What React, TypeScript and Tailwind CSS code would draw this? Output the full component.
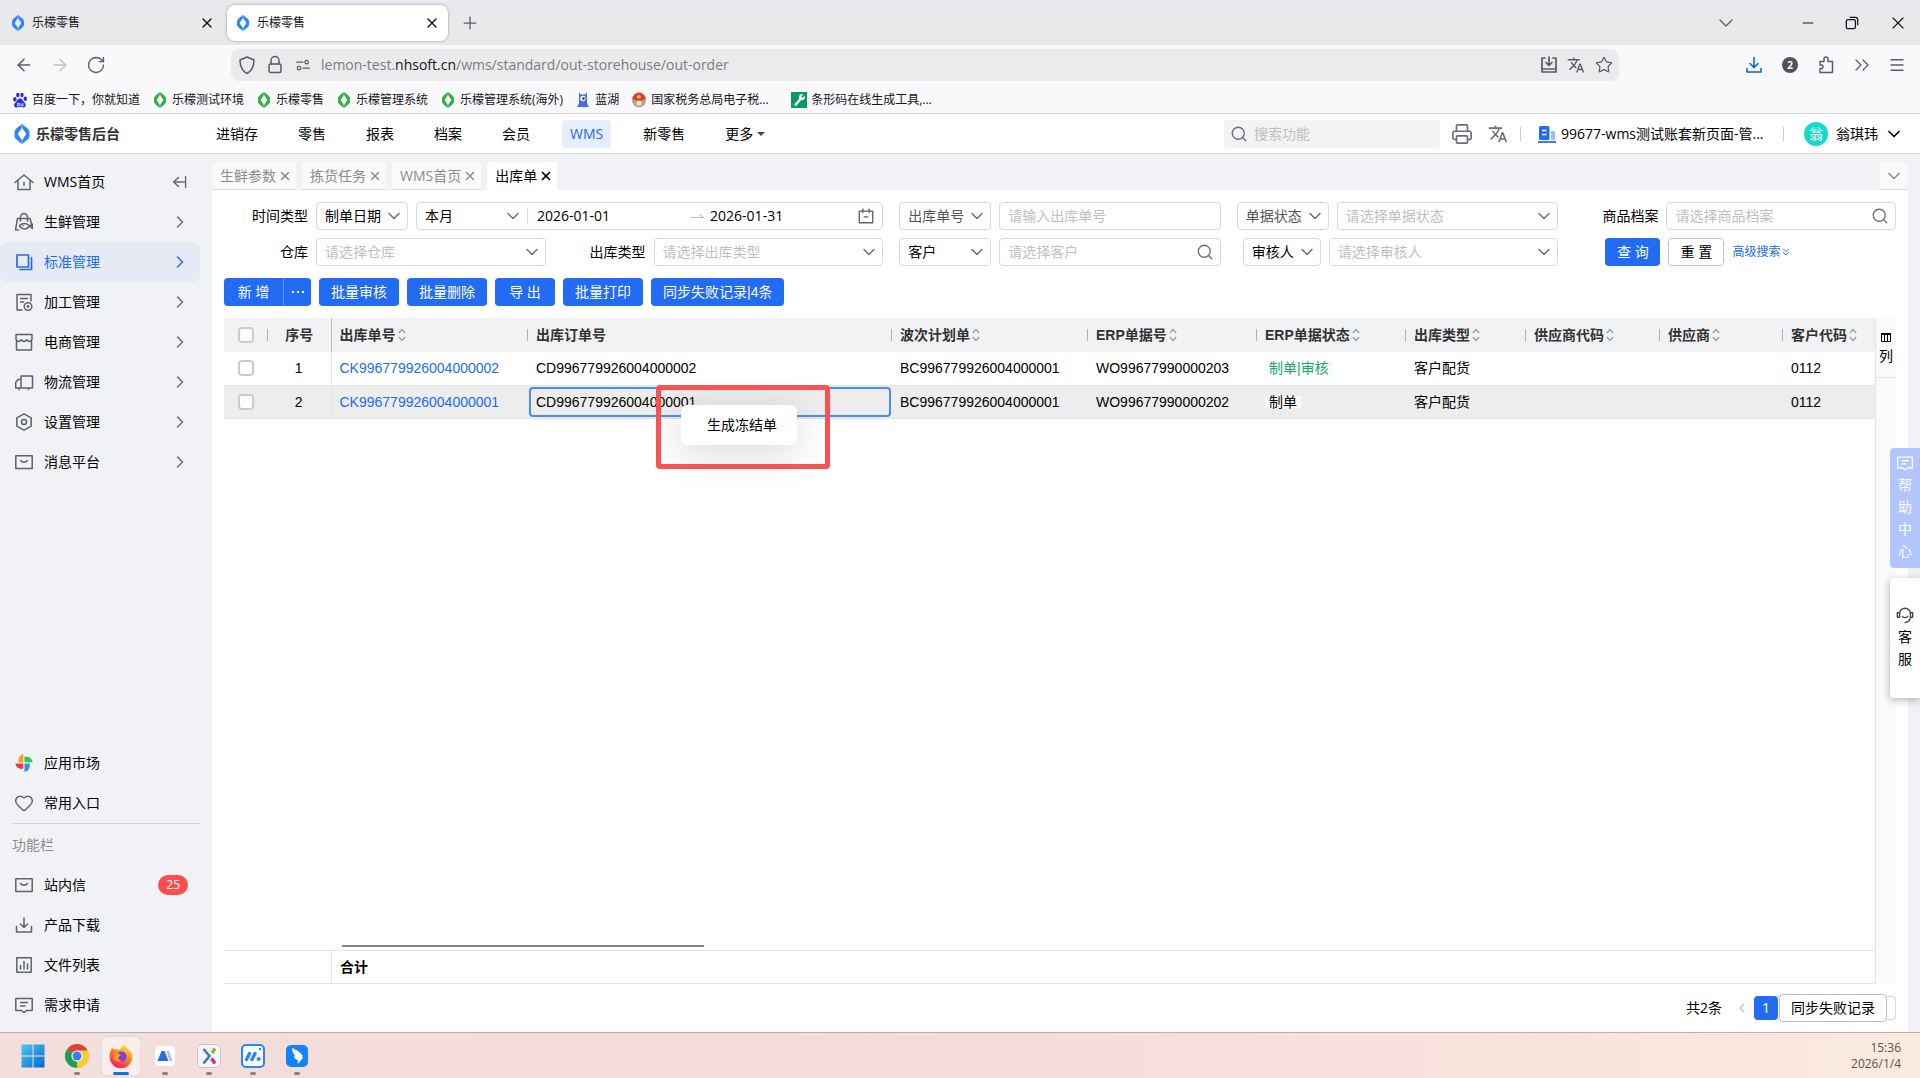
import type { ReactNode } from "react";
import {
  ArrowLeft,
  ArrowRight,
  ChevronDown,
  ChevronLeft,
  ChevronRight,
  ChevronsDown,
  ChevronsRight,
  Heart,
  Menu,
  Minus,
  Plus,
  Printer,
  RotateCw,
  Search,
  Star,
  X,
} from "lucide-react";
import { MdTranslate } from "react-icons/md";

type IconProps = { className?: string };

/* ---------- icons ---------- */

function Glyph({ className = "size-5", children }: { className?: string; children: ReactNode }) {
  return (
    <svg
      viewBox="0 0 20 20"
      fill="none"
      stroke="currentColor"
      strokeWidth="1.5"
      strokeLinecap="round"
      strokeLinejoin="round"
      className={`shrink-0 ${className}`}
      aria-hidden="true"
    >
      {children}
    </svg>
  );
}

function BrandMark({ className }: IconProps) {
  return (
    <svg viewBox="0 0 16 16" fill="currentColor" className={`shrink-0 ${className}`} aria-hidden="true">
      <path d="M7.800 0v3.200L4.600 8l3.200 4.800V16L3.100 12Q2 11 2 9.500v-3Q2 5 3.100 4z" />
      <path d="M8.200 0v3.200L11.400 8l-3.200 4.800V16l4.700-4q1.100-1 1.100-2.500v-3Q14 5 12.900 4z" />
    </svg>
  );
}

const HomeIcon = () => (
  <Glyph>
    <path d="M1 10.500 10 3l9 7.500M4 8.500V17.500h12V8.500M10 10.500v3" />
  </Glyph>
);
const FreshIcon = () => (
  <Glyph>
    <path d="M6.500 9V5a3.500 3.500 0 0 1 7 0v4M3.500 6.500h12.500l1.500 5.500M3.500 6.500 1.500 18h3M5.500 14c2-3.200 7.500-3.200 10 0 1-.3 2-1 2.800-2v4.500c-.8-1-1.800-1.800-2.800-2.200-2.500 3.500-8 3.500-10-.3zM9 13.800h.1" />
  </Glyph>
);
const LayersIcon = () => (
  <Glyph>
    <path d="M3 3h11.500v12H3zM17.500 5.500v12H6" strokeWidth="1.700" />
  </Glyph>
);
const ProcessIcon = () => (
  <Glyph>
    <path d="M8 18H3V2.500h14V9M6.500 6.500h7M6.500 10h3" />
    <circle cx="14" cy="14.500" r="3.800" />
    <circle cx="14" cy="14.500" r=".7" />
  </Glyph>
);
const ShopIcon = () => (
  <Glyph>
    <path d="M2.500 9v9h15V9M2 2.500h16v5c-1.500 2.500-3.500 2.500-5.300.3-1.700 2.200-3.700 2.200-5.400 0C5.500 10 3.500 10 2 7.500z" />
  </Glyph>
);
const TruckIcon = () => (
  <Glyph>
    <path d="M7 4h11.500v12H7zM7 7.500H4L1.700 10.500V16H7M5 16v1.500M14.500 16v1.500" />
  </Glyph>
);
const SettingIcon = () => (
  <Glyph>
    <path d="m10 1.800 7.200 4.100v8.200L10 18.200l-7.200-4.100V5.900z" />
    <circle cx="10" cy="10" r="2.500" />
  </Glyph>
);
const MailIcon = () => (
  <Glyph>
    <path d="M1.800 3.800h16.400v12.800H1.800zM6.500 8.500c2 2.300 5 2.300 7 0" />
  </Glyph>
);
const DownloadIcon = () => (
  <Glyph>
    <path d="M10 3v9M6.500 9l3.500 3.500L13.500 9M2.500 11.500V17h15v-5.500" />
  </Glyph>
);
const FileIcon = () => (
  <Glyph>
    <path d="M2.800 2.800h14.400v14.400H2.800zM6.500 10.500V14M10 6.500V14M13.500 9v5" />
  </Glyph>
);
const MessageIcon = ({ className }: IconProps) => (
  <Glyph className={className}>
    <path d="M1.800 3.500h16.400v12H12.500l-2.500 2-2.500-2H1.800zM6.500 7.500h7M6.500 11h4.500" />
  </Glyph>
);
const HeadsetIcon = () => (
  <Glyph className="size-[18px]">
    <path d="M4 12V8.500a6 6 0 0 1 12 0V12c0 4-2.500 6-6 6.500M4 7.500H1.500v5H4zM16 7.500h2.500v5H16zM7 11.500c1.500 1.800 4.500 1.800 6 0" />
  </Glyph>
);
const ExpandIcon = () => (
  <Glyph className="size-4 text-[#6b6e78]">
    <path d="M17 3v14M16 10H2M8 4.500 2 10l6 5.500" strokeWidth="1.800" />
  </Glyph>
);
const MarketIcon = () => (
  <svg viewBox="0 0 20 20" className="size-5 shrink-0" aria-hidden="true">
    <path d="M9.300 9.200H4.500C4 4.500 6 1.800 9.300 1z" fill="#fa9d1c" />
    <path d="M10.500 9.200V3.800c4.500-.3 7.500 1.700 8.200 5.400z" fill="#2dc84d" />
    <path d="M9.300 10.500v5.300C4.800 16.300 2 14.300 1.300 10.500z" fill="#f6393f" />
    <path d="M10.500 10.500h5.300c.4 4.700-1.600 7.700-5.300 8.500z" fill="#2f8ef8" />
  </svg>
);
const BuildingIcon = () => (
  <svg viewBox="0 0 20 20" className="size-5 shrink-0" aria-hidden="true">
    <rect x="2" y="2" width="10.500" height="14" rx="1.500" fill="#226bf3" />
    <path d="M5 6.500h4.500M5 10.500h4.500" stroke="#fff" strokeWidth="1.500" />
    <path d="M14 7h2.500a1.500 1.500 0 0 1 1.500 1.500V16h-4z" fill="#9dbdfa" />
    <path d="M1 18h18" stroke="#226bf3" strokeWidth="1.800" />
  </svg>
);

function SortIcon() {
  return (
    <svg viewBox="0 0 8 14" fill="none" stroke="#9a9da3" strokeWidth="1.200" className="h-[14px] w-2 shrink-0" aria-hidden="true">
      <path d="m.8 5 3.200-3.500L7.200 5M.8 9l3.200 3.500L7.200 9" />
    </svg>
  );
}

/* ---------- browser chrome ---------- */

function BrowserTab({ active = false }: { active?: boolean }) {
  return (
    <div
      className={`flex h-9 w-[221px] items-center rounded-lg px-2 ${
        active ? "bg-white shadow-[0_0_3px_rgba(0,0,0,0.35)]" : ""
      }`}
    >
      <BrandMark className="size-4 text-[#2f86f8]" />
      <span className="ml-1.5 flex-1 text-xs text-[#15141a]">乐檬零售</span>
      <button aria-label="关闭标签页">
        <X className="size-4" strokeWidth={2} />
      </button>
    </div>
  );
}

const bookmarks = [
  { label: "百度一下，你就知道", icon: "paw" },
  { label: "乐檬测试环境", icon: "lemon" },
  { label: "乐檬零售", icon: "lemon" },
  { label: "乐檬管理系统", icon: "lemon" },
  { label: "乐檬管理系统(海外)", icon: "lemon" },
  { label: "蓝湖", icon: "lanhu" },
  { label: "国家税务总局电子税...", icon: "tax" },
  { label: "条形码在线生成工具,...", icon: "wrench" },
];

function BookmarkIcon({ name }: { name: string }) {
  if (name === "lemon") return <BrandMark className="size-4 text-[#2fb344]" />;
  if (name === "paw")
    return (
      <svg viewBox="0 0 16 16" fill="#2a32d8" className="size-4 shrink-0" aria-hidden="true">
        <ellipse cx="2.800" cy="7.200" rx="1.700" ry="2.200" />
        <ellipse cx="5.800" cy="3" rx="1.700" ry="2.300" />
        <ellipse cx="10" cy="3" rx="1.700" ry="2.300" />
        <ellipse cx="13.300" cy="6.800" rx="1.700" ry="2.200" />
        <path d="M8 6.500c2.500 0 2.500 2.200 4.500 4s1.500 5-1 5c-1.500 0-2-.4-3.500-.4s-2 .4-3.500.4c-2.500 0-3.200-3-1.200-4.800S5.500 6.500 8 6.500z" />
        <path d="M5.500 11.300h1.700v2.500H5.500zM9 11.300v2.500h2v-2.500" fill="none" stroke="#fff" strokeWidth=".8" />
      </svg>
    );
  if (name === "lanhu")
    return (
      <svg viewBox="0 0 16 16" className="size-4 shrink-0" aria-hidden="true">
        <path d="M4 .5 6 2.500h4l2-2v11l2 3.500H2l2-3.500z" fill="#3f6df5" />
        <circle cx="8" cy="6.500" r="2.700" fill="#fff" />
        <circle cx="8.500" cy="6.500" r="1.300" fill="#1c2c66" />
      </svg>
    );
  if (name === "tax")
    return (
      <svg viewBox="0 0 16 16" className="size-4 shrink-0" aria-hidden="true">
        <circle cx="8" cy="8.500" r="7" fill="#b9a58c" />
        <path d="M1.500 7a6.500 6.500 0 0 1 13 0L8 9.500z" fill="#d93a2b" />
        <path d="m8 2 .8 1.700 1.900.2-1.400 1.200.4 1.900L8 6l-1.700 1 .4-1.900-1.400-1.200 1.900-.2z" fill="#f7d24a" />
        <circle cx="8" cy="11" r="2.500" fill="#eee4d5" />
      </svg>
    );
  return (
    <svg viewBox="0 0 16 16" className="size-4 shrink-0" aria-hidden="true">
      <path d="M0 0h16v16H0z" fill="#0a9a5f" />
      <path d="M4 13.500 9.500 7" stroke="#fff" strokeWidth="2.200" />
      <path d="M12.300 2.300 10.500 4.200l.3 1.200 1.300.2L14 4a3.300 3.300 0 0 1-4.600 3.900L8 6.500a3.300 3.300 0 0 1 4.300-4.200z" fill="#fff" />
    </svg>
  );
}

function BrowserChrome() {
  return (
    <header className="shrink-0 bg-[#f9f9fb] text-[#5b5b66]">
      <div className="flex h-[45px] items-center border-t border-[#e4ecf7] bg-[#e9e9eb] pl-0.5 pr-3 text-[#15141a]">
        <BrowserTab />
        <div className="ml-1">
          <BrowserTab active />
        </div>
        <button aria-label="新标签页" className="ml-3">
          <Plus className="size-5 text-[#5b5b66]" strokeWidth={1.500} />
        </button>
        <div className="ml-auto flex items-center">
          <ChevronDown className="mr-[62px] size-6 text-[#5b5b66]" strokeWidth={1.300} />
          <button aria-label="最小化" className="mr-7">
            <Minus className="size-4" strokeWidth={1.700} />
          </button>
          <button aria-label="还原" className="mr-7">
            <svg viewBox="0 0 14 14" fill="none" stroke="currentColor" strokeWidth="1.100" className="size-4">
              <rect x="2" y="4" width="8" height="8" rx="1.500" />
              <path d="M5 2h5a2 2 0 0 1 2 2v5" />
            </svg>
          </button>
          <button aria-label="关闭">
            <X className="size-5" strokeWidth={1.300} />
          </button>
        </div>
      </div>

      <nav className="flex h-10 items-center px-3.5">
        <ArrowLeft className="size-5" strokeWidth={1.800} />
        <ArrowRight className="ml-4 size-5 text-[#bfbfc5]" strokeWidth={1.800} />
        <RotateCw className="ml-4 size-5" strokeWidth={1.600} />
        <div className="ml-[125px] flex h-8 min-w-0 flex-1 items-center rounded-lg bg-[#ebebed] px-1.5">
          <Glyph className="size-5">
            <path d="m10 2 7 3c0 6.500-1.500 10.500-7 13.500C4.500 15.500 3 11.500 3 5z" />
          </Glyph>
          <Glyph className="ml-2 size-5">
            <path d="M6 9V5.500a4 4 0 0 1 8 0V9" />
            <rect x="4" y="9" width="12" height="8.500" rx="1.500" />
          </Glyph>
          <Glyph className="ml-2.5 size-4">
            <path d="M2 6.500h8M10 14h8" />
            <circle cx="14.500" cy="6.500" r="2.200" />
            <circle cx="5" cy="14" r="2.200" />
          </Glyph>
          <p className="ml-2.5 flex-1 truncate text-sm text-[#7b7b83]">
            lemon-test.<span className="text-[#15141a]">nhsoft.cn</span>/wms/standard/out-storehouse/out-order
          </p>
          <Glyph className="size-5">
            <path d="M6 3H3v14h14V3h-3M3 14h14M10 2v8M7 7.500l3 3 3-3" strokeWidth="1.700" />
          </Glyph>
          <MdTranslate className="ml-2 size-[18px]" />
          <Star className="ml-2.5 size-[18px]" strokeWidth={1.700} />
        </div>
        <div className="ml-[125px] flex items-center gap-4">
          <Glyph className="size-5 text-[#0060df]">
            <path d="M10 2.500V12M6 8.500l4 4 4-4M3 13.500V17h14v-3.500" />
          </Glyph>
          <span className="flex size-5 items-center justify-center">
            <span className="flex size-4 items-center justify-center rounded-full bg-[#52525e] text-[10px] font-bold text-white">2</span>
          </span>
          <Glyph className="size-5">
            <path d="M4 6.500h4V4a2 2 0 0 1 4 0v2.500h4.500v11H4v-4h2a2 2 0 0 0 0-3.500H4z" />
          </Glyph>
          <ChevronsRight className="size-6 -mx-0.5" strokeWidth={1.300} />
          <Menu className="size-[18px]" strokeWidth={1.700} />
        </div>
      </nav>

      <div className="flex h-[29px] items-center gap-3 border-b border-[#d5d5d9] pb-0.5 pl-3 pt-1 text-xs text-[#15141a]">
        {bookmarks.map((item) => (
          <a key={item.label} href="#" className={`flex items-center gap-1 whitespace-nowrap ${item.icon === "tax" ? "w-[148px]" : ""}`}>
            <BookmarkIcon name={item.icon} />
            {item.label}
          </a>
        ))}
      </div>
    </header>
  );
}

/* ---------- application frame ---------- */

const modules = ["进销存", "零售", "报表", "档案", "会员", "WMS", "新零售"];

function AppHeader() {
  return (
    <header className="flex h-10 shrink-0 items-center border-b border-[#d9d9d9] bg-white pl-3 pr-4">
      <BrandMark className="size-5 text-[#2f86f8]" />
      <h1 className="ml-1 w-[172px] text-sm font-bold text-[#333]">乐檬零售后台</h1>
      <nav className="flex gap-6 whitespace-nowrap">
        {modules.map((name) => (
          <a
            key={name}
            href="#"
            className={`h-7 rounded px-2 leading-7 ${name === "WMS" ? "bg-[#e6edfb] text-[#226bf3]" : ""}`}
          >
            {name}
          </a>
        ))}
        <a href="#" className="flex h-7 items-center gap-1 px-2">
          更多
          <span className="border-x-4 border-t-4 border-x-transparent border-t-[#444]" />
        </a>
      </nav>
      <label className="ml-auto flex h-7 w-[216px] items-center gap-1.5 rounded bg-[#f2f3f5] px-1.5">
        <Search className="size-[18px] text-[#6b6e78]" strokeWidth={1.700} />
        <input aria-label="搜索功能" placeholder="搜索功能" className="min-w-0 flex-1 outline-none placeholder:text-[#bfbfbf]" />
      </label>
      <Printer className="ml-[11px] size-[22px] text-[#6b6e78]" strokeWidth={1.800} />
      <MdTranslate className="ml-[15px] size-5 text-[#6b6e78]" />
      <span className="ml-3 h-3.5 w-px bg-[#c9cbd0]" />
      <div className="ml-4 flex w-[230px] items-center gap-1 whitespace-nowrap">
        <BuildingIcon />
        99677-wms测试账套新页面-管...
      </div>
      <span className="ml-4 h-3.5 w-px bg-[#c9cbd0]" />
      <button className="ml-5 flex items-center">
        <span className="flex size-6 items-center justify-center rounded-full bg-[#13dbca] text-sm text-white">翁</span>
        <span className="ml-2">翁琪玮</span>
        <ChevronDown className="ml-1.5 size-5" strokeWidth={2} />
      </button>
    </header>
  );
}

const menu = [
  { label: "WMS首页", icon: <HomeIcon /> },
  { label: "生鲜管理", icon: <FreshIcon /> },
  { label: "标准管理", icon: <LayersIcon /> },
  { label: "加工管理", icon: <ProcessIcon /> },
  { label: "电商管理", icon: <ShopIcon /> },
  { label: "物流管理", icon: <TruckIcon /> },
  { label: "设置管理", icon: <SettingIcon /> },
  { label: "消息平台", icon: <MailIcon /> },
];

const tools = [
  { label: "站内信", icon: <MailIcon />, badge: 25 },
  { label: "产品下载", icon: <DownloadIcon /> },
  { label: "文件列表", icon: <FileIcon /> },
  { label: "需求申请", icon: <MessageIcon className="size-5" /> },
];

function SideItem({ icon, label, active = false, children }: { icon: ReactNode; label: string; active?: boolean; children?: ReactNode }) {
  return (
    <a
      href="#"
      className={`flex h-10 items-center rounded-lg pl-3.5 pr-3 ${active ? "bg-[#e6eaf5] text-[#226bf3]" : ""}`}
    >
      <span className={active ? "" : "text-[#5f626e]"}>{icon}</span>
      <span className="ml-2.5 flex-1">{label}</span>
      {children}
    </a>
  );
}

function Sidebar() {
  return (
    <aside className="flex w-[212px] shrink-0 flex-col pb-[7px] pr-3 pt-2">
      {menu.map((item, index) => (
        <SideItem key={item.label} icon={item.icon} label={item.label} active={index === 2}>
          {index === 0 ? (
            <ExpandIcon />
          ) : (
            <ChevronRight className={`-mr-0.5 size-5 ${index === 2 ? "" : "text-[#6b6e78]"}`} strokeWidth={1.800} />
          )}
        </SideItem>
      ))}
      <div className="mt-auto">
        <SideItem icon={<MarketIcon />} label="应用市场" />
        <SideItem icon={<Heart className="size-5" strokeWidth={1.700} />} label="常用入口" />
      </div>
      <p className="ml-3 h-[42px] border-t border-[#d3d5d9] leading-[42px] text-[#8c8c8c]">功能栏</p>
      {tools.map((item) => (
        <SideItem key={item.label} icon={item.icon} label={item.label}>
          {item.badge && (
            <span className="h-5 rounded-full bg-[#ff4d4f] px-2 text-xs leading-5 text-white">{item.badge}</span>
          )}
        </SideItem>
      ))}
    </aside>
  );
}

const pageTabs = ["生鲜参数", "拣货任务", "WMS首页", "出库单"];

function PageTabs() {
  return (
    <div className="flex h-9 items-end gap-1.5">
      {pageTabs.map((name) => {
        const active = name === "出库单";
        return (
          <div
            key={name}
            className={`flex h-7 items-center gap-0.5 rounded-t border-b pl-2 pr-1 ${
              active ? "border-white bg-white" : "border-[#d9d9d9] bg-[#fafafa] text-[#8c8c8c]"
            }`}
          >
            {name}
            <button aria-label={`关闭${name}`}>
              <X className="size-3.5" strokeWidth={active ? 3 : 2.500} />
            </button>
          </div>
        );
      })}
      <button aria-label="更多标签" className="ml-auto flex h-7 w-7 items-center justify-center rounded-t border-b border-[#d9d9d9] bg-[#fafafa]">
        <ChevronDown className="size-5 text-[#8c8c8c]" strokeWidth={1.800} />
      </button>
    </div>
  );
}

/* ---------- filters ---------- */

function Picker({ label, value, muted = false, plain = false, className = "flex-1" }: {
  label: string;
  value: string;
  muted?: boolean;
  plain?: boolean;
  className?: string;
}) {
  return (
    <div className={`relative min-w-0 ${className}`}>
      <select
        aria-label={label}
        className={`h-7 w-full appearance-none pl-2 pr-5 outline-none ${muted ? "text-[#bfbfbf]" : ""} ${
          plain ? "" : "rounded border border-[#d9d9d9] bg-white"
        }`}
      >
        <option>{value}</option>
      </select>
      <ChevronDown className="pointer-events-none absolute right-1 top-1 size-5 text-[#6b6e78]" strokeWidth={1.800} />
    </div>
  );
}

function TextBox({ label, search = false, id }: { label: string; search?: boolean; id?: string }) {
  return (
    <div className="flex h-7 min-w-0 flex-1 items-center rounded border border-[#d9d9d9] bg-white pl-2 pr-1.5">
      <input id={id} aria-label={label} placeholder={label} className="min-w-0 flex-1 outline-none placeholder:text-[#bfbfbf]" />
      {search && <Search className="size-[18px] text-[#6b6e78]" strokeWidth={1.700} />}
    </div>
  );
}

function Filters() {
  return (
    <form className="grid grid-cols-5 gap-x-4 gap-y-2">
      <div className="col-span-2 flex items-center gap-2">
        <span className="w-[84px] shrink-0 text-right">时间类型</span>
        <Picker label="时间类型" value="制单日期" className="w-[92px] shrink-0" />
        <div className="flex h-7 min-w-0 flex-1 items-center rounded border border-[#d9d9d9] pr-[7px]">
          <Picker label="时间范围" value="本月" plain className="w-[110px] shrink-0" />
          <span className="h-4 w-px shrink-0 bg-[#d9d9d9]" />
          <input aria-label="开始日期" defaultValue="2026-01-01" className="ml-[9px] mr-1.5 min-w-0 flex-1 outline-none" />
          <Glyph className="size-3.5 text-[#bfbfbf]">
            <path d="M1 12h18l-5-4" />
          </Glyph>
          <input aria-label="结束日期" defaultValue="2026-01-31" className="ml-1.5 min-w-0 flex-1 outline-none" />
          <Glyph className="size-[18px] text-[#5f626e]">
            <path d="M2.500 4.500h15v13h-15zM6.500 2v4M13.500 2v4M8 11h4" />
          </Glyph>
        </div>
      </div>
      <div className="flex gap-2">
        <Picker label="单号类型" value="出库单号" className="w-[92px] shrink-0 text-[#555]" />
        <TextBox label="请输入出库单号" />
      </div>
      <div className="flex gap-2">
        <Picker label="状态类型" value="单据状态" className="w-[92px] shrink-0 text-[#555]" />
        <Picker label="单据状态" value="请选择单据状态" muted />
      </div>
      <div className="flex items-center gap-2">
        <label htmlFor="product" className="w-[84px] shrink-0 text-right">商品档案</label>
        <TextBox id="product" label="请选择商品档案" search />
      </div>

      <div className="flex items-center gap-2">
        <span className="w-[84px] shrink-0 text-right">仓库</span>
        <Picker label="仓库" value="请选择仓库" muted />
      </div>
      <div className="flex items-center gap-2">
        <span className="w-[84px] shrink-0 text-right">出库类型</span>
        <Picker label="出库类型" value="请选择出库类型" muted />
      </div>
      <div className="flex gap-2">
        <Picker label="往来类型" value="客户" className="w-[92px] shrink-0" />
        <TextBox label="请选择客户" search />
      </div>
      <div className="flex gap-2">
        <div className="flex w-[84px] shrink-0 justify-end">
          <Picker label="人员类型" value="审核人" className="w-[78px]" />
        </div>
        <Picker label="审核人" value="请选择审核人" muted />
      </div>
      <div className="flex items-center gap-2 pl-[31px]">
        <button type="button" className="h-7 w-[55px] rounded bg-[#226bf3] text-white">查 询</button>
        <button type="button" className="h-7 w-14 rounded border border-[#c4c4c4]">重 置</button>
        <a href="#" className="flex items-center whitespace-nowrap text-xs text-[#226bf3]">
          高级搜索
          <ChevronsDown className="size-3" />
        </a>
      </div>
    </form>
  );
}

function Toolbar() {
  const button = "h-7 rounded bg-[#226bf3] px-3 text-white whitespace-nowrap";
  return (
    <div className="mt-3 flex gap-2">
      <div className="flex overflow-hidden rounded bg-[#226bf3] text-white">
        <button className="h-7 w-[60px] border-r border-[#5c91f7]">新 增</button>
        <button aria-label="更多操作" className="flex w-[27px] items-center justify-center gap-[3px]">
          <span className="size-0.5 bg-white" />
          <span className="size-0.5 bg-white" />
          <span className="size-0.5 bg-white" />
        </button>
      </div>
      <button className={button}>批量审核</button>
      <button className={button}>批量删除</button>
      <button className="h-7 w-[60px] rounded bg-[#226bf3] text-white">导 出</button>
      <button className={button}>批量打印</button>
      <button className={`font-['Liberation_Sans','Noto_Sans_CJK_SC',sans-serif] ${button}`}>同步失败记录|4条</button>
    </div>
  );
}

/* ---------- table ---------- */

const columns = [
  { title: "出库订单号", width: "w-[364px]", sortable: false },
  { title: "波次计划单", width: "w-[196px]", sortable: true },
  { title: "ERP单据号", width: "w-[169px]", sortable: true },
  { title: "ERP单据状态", width: "w-[149px]", sortable: true },
  { title: "出库类型", width: "w-[120px]", sortable: true },
  { title: "供应商代码", width: "w-[134px]", sortable: true },
  { title: "供应商", width: "w-[123px]", sortable: true },
  { title: "客户代码", width: "", sortable: true },
];

const orders = [
  {
    code: "CK996779926004000002",
    order: "CD996779926004000002",
    wave: "BC996779926004000001",
    erp: "WO99677990000203",
    status: "制单|审核",
    type: "客户配货",
    client: "0112",
  },
  {
    code: "CK996779926004000001",
    order: "CD996779926004000001",
    wave: "BC996779926004000001",
    erp: "WO99677990000202",
    status: "制单",
    type: "客户配货",
    client: "0112",
  },
];

function Tick({ label }: { label: string }) {
  return (
    <input
      type="checkbox"
      aria-label={label}
      className="mx-auto block size-4 appearance-none rounded-sm border-2 border-[#cbcbcb] bg-white"
    />
  );
}

function HeadLabel({ title, sortable }: { title: string; sortable: boolean }) {
  return (
    <span className="flex h-3 items-center gap-0.5 border-l border-[#aab0bd] pl-2">
      {title}
      {sortable && <SortIcon />}
    </span>
  );
}

function OrderTable() {
  return (
    <table className="w-full table-fixed border-collapse whitespace-nowrap text-left font-['Liberation_Sans','Noto_Sans_CJK_SC',sans-serif]">
      <thead>
        <tr className="h-[34px] bg-[#f1f2f4] text-[#333]">
          <th className="w-[43px]">
            <Tick label="全选" />
          </th>
          <th className="w-16 border-r border-[#babfc7] font-bold">
            <span className="flex h-3 items-center justify-center border-l border-[#aab0bd]">序号</span>
          </th>
          <th className="w-[196px] pl-2 font-bold">
            <span className="flex items-center gap-0.5">
              出库单号
              <SortIcon />
            </span>
          </th>
          {columns.map((column) => (
            <th key={column.title} className={`font-bold ${column.width}`}>
              <HeadLabel title={column.title} sortable={column.sortable} />
            </th>
          ))}
        </tr>
      </thead>
      <tbody>
        {orders.map((row, index) => (
          <tr key={row.code} className={`h-[33px] border-b border-[#e2e4e6] ${index === 1 ? "bg-[#ededed]" : ""}`}>
            <td>
              <Tick label={`选择第${index + 1}行`} />
            </td>
            <td className="border-r border-[#e2e4e6] text-center">{index + 1}</td>
            <td className="pl-2">
              <a href="#" className="text-[#226bf3]">{row.code}</a>
            </td>
            <td className="pl-0.5">
              <div className={`h-[30px] rounded border-2 pl-[5px] leading-[26px] ${index === 1 ? "border-[#4a8df8]" : "border-transparent"}`}>
                {row.order}
              </div>
            </td>
            <td className="pl-[9px]">{row.wave}</td>
            <td className="pl-[9px]">{row.erp}</td>
            <td className="pl-[9px]">
              <span className={`block w-fit px-1 leading-3 ${index === 0 ? "bg-[#f6fcf9] text-[#24a56b]" : "bg-[#fafafa]"}`}>
                {row.status}
              </span>
            </td>
            <td className="pl-[9px]">{row.type}</td>
            <td />
            <td />
            <td className="pl-[9px]">{row.client}</td>
          </tr>
        ))}
      </tbody>
    </table>
  );
}

function OrderGrid() {
  return (
    <section className="relative mt-3 flex min-h-0 flex-1">
      <div className="flex min-w-0 flex-1 flex-col">
        <OrderTable />
        <div className="ml-[118px] mt-auto h-0.5 w-[362px] bg-[#858585]" />
        <div className="mt-[3px] flex h-[34px] border-y border-[#e2e4e6] font-bold leading-8">
          <span className="w-[108px] border-r border-[#e2e4e6]" />
          <span className="pl-2">合计</span>
        </div>
      </div>
      <div className="w-[21px] shrink-0 border-l border-[#e2e4e6] bg-[#f9fafb]">
        <button className="flex h-[60px] w-full flex-col items-center justify-center gap-1 border-b border-[#e2e4e6] leading-5">
          <svg viewBox="0 0 10 9" fill="none" stroke="#000" className="mt-1 h-[9px] w-2.5" aria-hidden="true">
            <path d="M0 1h10" strokeWidth="2" />
            <path d="M.5 1v7.500h9V1M3.500 1v7.500M6.500 1v7.500" />
          </svg>
          列
        </button>
      </div>

      {/* row context menu */}
      <div className="absolute left-[457px] top-[87px] flex h-10 w-[116px] items-center rounded-md bg-white pl-[26px] shadow-[0_8px_40px_rgba(0,0,0,0.16)]">
        <button>生成冻结单</button>
      </div>
      <div className="pointer-events-none absolute left-[432px] top-[67px] h-[84px] w-[174px] rounded-sm border-5 border-[#fa5252]" />
    </section>
  );
}

function Pagination() {
  return (
    <footer className="flex h-12 items-center justify-end">
      <span>共2条</span>
      <button aria-label="上一页" className="ml-3">
        <ChevronLeft className="size-4 text-[#bfbfbf]" strokeWidth={1.700} />
      </button>
      <button className="ml-1 size-6 rounded bg-[#226bf3] text-white">1</button>
      <div className="flex h-6 items-center rounded-r border border-l-0 border-[#d9d9d9] pl-px pr-2">
        <button className="h-7 w-[108px] rounded border border-[#bfbfbf] bg-white">同步失败记录</button>
      </div>
    </footer>
  );
}

function FloatingHelp() {
  return (
    <div className="absolute right-0 top-[294px] flex w-[30px] flex-col gap-2.5">
      <button className="flex h-[120px] flex-col items-center rounded-l bg-[#b2c5ff] pt-1.5 leading-[22px] text-white">
        <MessageIcon className="mb-0.5 size-[18px]" />
        {["帮", "助", "中", "心"].map((char) => (
          <span key={char}>{char}</span>
        ))}
      </button>
      <button className="flex h-[120px] flex-col items-center justify-center rounded-l bg-white leading-[22px] shadow-[0_2px_8px_rgba(0,0,0,0.3)]">
        <span className="mb-0.5 text-[#3f424c]">
          <HeadsetIcon />
        </span>
        <span>客</span>
        <span>服</span>
      </button>
    </div>
  );
}

/* ---------- taskbar ---------- */

const WindowsLogo = () => (
  <svg viewBox="0 0 24 24" className="size-6" aria-hidden="true">
    <defs>
      <linearGradient id="win" x1="0" y1="0" x2="1" y2="1">
        <stop stopColor="#4cc9f7" />
        <stop offset="1" stopColor="#0568c8" />
      </linearGradient>
    </defs>
    <path d="M.5.500h11v11H.5zM12.500.500h11v11h-11zM.5 12.500h11v11H.5zM12.500 12.500h11v11h-11z" fill="url(#win)" />
  </svg>
);
const ChromeLogo = () => (
  <svg viewBox="0 0 24 24" className="size-6" aria-hidden="true">
    <path d="M12 12 1.600 6A12 12 0 0 1 22.400 6z" fill="#db4437" />
    <path d="M12 12 22.400 6A12 12 0 0 1 12 24z" fill="#fcc934" />
    <path d="M12 12v12A12 12 0 0 1 1.600 6z" fill="#1e9e55" />
    <path d="M12 6.500h10.600A12 12 0 0 1 12 24l4.800-9.200z" fill="#fcc934" />
    <circle cx="12" cy="12" r="5.600" fill="#fff" />
    <circle cx="12" cy="12" r="4.500" fill="#3b7ded" />
  </svg>
);
const FirefoxLogo = () => (
  <svg viewBox="0 0 24 24" className="size-6" aria-hidden="true">
    <defs>
      <linearGradient id="fox" x1=".8" y1="0" x2=".3" y2="1">
        <stop stopColor="#fff14f" />
        <stop offset=".45" stopColor="#ff8a1e" />
        <stop offset="1" stopColor="#f5156c" />
      </linearGradient>
    </defs>
    <path d="M15 0c.5 2.500 3 4 5 6 2 2 3.500 4 3.300 7A11.300 11.300 0 0 1 .7 13C.5 9 2 5 3.500 3c.3 1.500 1 2.200 1.800 2.800C7 5 9 5.300 10.500 6 12.500 4.500 13 2 15 0z" fill="url(#fox)" />
    <circle cx="12.500" cy="12.500" r="5" fill="#7a3fe0" />
    <path d="M5.300 10c2-1.500 4.500-.8 6 .5 1 .8.200 2-1.800 2.300-1 1.800.8 3.700 3 3.700-3 2.200-8 .5-8-4z" fill="#ff9a1f" />
  </svg>
);
const PeaksLogo = () => (
  <svg viewBox="0 0 24 24" className="size-6" aria-hidden="true">
    <rect x="2" y="2" width="20" height="20" rx="4.500" fill="#fff" />
    <path d="m4.500 17 4-10h3l4 10z" fill="#2f6be6" />
    <path d="M13.500 7h2.500l3.500 10h-3z" fill="#a9c0f2" />
  </svg>
);
const CrossLogo = () => (
  <svg viewBox="0 0 24 24" className="size-6" aria-hidden="true">
    <rect x=".5" y=".5" width="23" height="23" rx="4" fill="#f6f6f6" stroke="#c9c2c2" />
    <path d="m6.500 5 6 7-6 7.500" fill="none" stroke="#2a86b0" strokeWidth="2.600" />
    <path d="M18 4.500 15 9" stroke="#76bc43" strokeWidth="3.200" />
    <path d="m14.500 14.500 3.500 5" stroke="#d9267c" strokeWidth="3.200" />
  </svg>
);
const MeetLogo = () => (
  <svg viewBox="0 0 24 24" className="size-6" aria-hidden="true">
    <rect x="1" y="1" width="22" height="22" rx="4" fill="#fff" stroke="#2688f5" strokeWidth="2" />
    <path d="m5.500 15.500 3-6M11 15.500l3-6" stroke="#2688f5" strokeWidth="3.400" strokeLinecap="round" />
    <circle cx="17.700" cy="15" r="2" fill="#2688f5" />
    <circle cx="19" cy="5" r="1.200" fill="#2688f5" />
  </svg>
);
const WingLogo = () => (
  <svg viewBox="0 0 24 24" className="size-6" aria-hidden="true">
    <rect x="1" y="1" width="22" height="22" rx="5" fill="#1283ff" />
    <path d="M7 4c4 1.500 9 4.500 10.500 7.500.3 1-.5 1.800-.5 1.800l1 .7-5.500 6 .5-4c-2 0-4-2-4.300-4 .7.300 1.500.3 2 .2C8.500 10.500 7 7.500 7 4z" fill="#fff" />
  </svg>
);

const tasks = [
  { name: "开始", logo: <WindowsLogo />, state: "none" },
  { name: "Chrome", logo: <ChromeLogo />, state: "open" },
  { name: "Firefox", logo: <FirefoxLogo />, state: "active" },
  { name: "Peaks", logo: <PeaksLogo />, state: "open" },
  { name: "Xshell", logo: <CrossLogo />, state: "open" },
  { name: "Meet", logo: <MeetLogo />, state: "open" },
  { name: "钉钉", logo: <WingLogo />, state: "open" },
];

function Taskbar() {
  return (
    <footer className="flex h-[46px] shrink-0 items-center justify-between border-t border-[#b9adad] bg-linear-to-r from-[#f2dfdc] via-[#f7dadb] to-[#faeade] pl-3.5 pr-[19px]">
      <div className="flex gap-1.5">
        {tasks.map((task) => (
          <button
            key={task.name}
            aria-label={task.name}
            className={`flex h-[38px] w-[38px] flex-col items-center rounded pt-[7px] ${
              task.state === "active" ? "bg-[#faeeec] shadow-[0_0_1px_rgba(0,0,0,0.2)]" : ""
            }`}
          >
            {task.logo}
            {task.state === "active" && <span className="mt-1 h-[3px] w-4 rounded-full bg-[#0f78d4]" />}
            {task.state === "open" && <span className="mt-1 h-[3px] w-1.5 rounded-full bg-[#8a8080]" />}
          </button>
        ))}
      </div>
      <div className="text-right text-xs leading-4 text-[#5c5352]">
        <p>15:36</p>
        <p>2026/1/4</p>
      </div>
    </footer>
  );
}

export default function App() {
  return (
    <div className="flex h-screen flex-col overflow-hidden bg-[#f1f2f5] font-['Open_Sans','Noto_Sans_CJK_SC',sans-serif] text-sm text-black">
      <BrowserChrome />
      <AppHeader />
      <div className="relative flex min-h-0 flex-1">
        <Sidebar />
        <main className="flex min-w-0 flex-1 flex-col pr-3">
          <PageTabs />
          <div className="flex min-h-0 flex-1 flex-col bg-white px-3 pt-3">
            <Filters />
            <Toolbar />
            <OrderGrid />
            <Pagination />
          </div>
        </main>
        <FloatingHelp />
      </div>
      <Taskbar />
    </div>
  );
}
